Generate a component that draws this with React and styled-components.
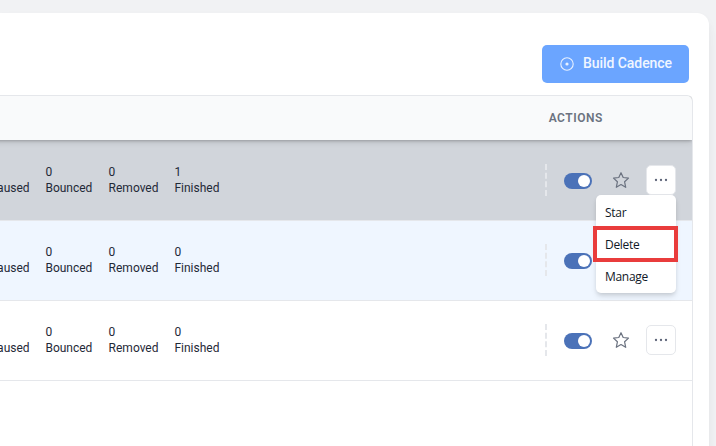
import React from 'react';
import styled, { createGlobalStyle } from 'styled-components';

const GlobalStyle = createGlobalStyle`
  * { box-sizing: border-box; }
  body { margin: 0; overflow: hidden; background: #f1f2f4; font-family: Roboto, "Liberation Sans", sans-serif; }
`;

const Page = styled.div`
  height: 446px;
  width: 716px;
  padding: 13px 7px 0 0;
  overflow: hidden;
`;

const Card = styled.main`
  height: 460px;
  padding: 32px 16px 0 0;
  background: #fff;
  border-top-right-radius: 12px;
  box-shadow: 0 10px 15px -3px rgba(0, 0, 0, 0.05), 0 4px 8px rgba(0, 0, 0, 0.04);
`;

const Toolbar = styled.div`
  display: flex;
  justify-content: flex-end;
  padding-right: 4px;
  margin-bottom: 12px;
`;

const BuildButton = styled.button`
  display: flex;
  align-items: center;
  gap: 9px;
  width: 147px;
  height: 38px;
  padding: 0 0 0 18px;
  border: 0;
  border-radius: 5px;
  background: #6ba5ff;
  color: #f0f6ff;
  font: 500 14px/20px Roboto, sans-serif;
  letter-spacing: -0.06px;
  white-space: nowrap;

  svg { flex: none; }
  span { margin-top: -2px; }
`;

const Table = styled.section`
  height: 400px;
  border: 1px solid #e5e7eb;
  border-left: 0;
  border-top-right-radius: 6px;
`;

const TableHeader = styled.header`
  position: relative;
  display: flex;
  align-items: center;
  justify-content: flex-end;
  height: 44px;
  margin-left: -10px;
  padding-right: 89px;
  border-top-right-radius: 5px;
  background: #f9fafb;
  box-shadow: 0 1px 3px rgba(0, 0, 0, 0.2), 0 2px 6px rgba(0, 0, 0, 0.12);
  clip-path: inset(0 0 -12px 0);
  color: #6b7280;
  font-size: 12px;
  font-weight: 600;
  letter-spacing: 0.55px;
`;

const Row = styled.div`
  display: flex;
  align-items: center;
  justify-content: space-between;
  height: ${(p) => (p.$first ? 81 : 80)}px;
  padding: 0 16px ${(p) => (p.$first ? 0 : 1)}px 0;
  border-bottom: 1px solid #e5e7eb;
  background: ${(p) => p.$bg};
`;

const Stats = styled.div`
  display: flex;
  gap: 16px;
  margin-left: -10.4px;
`;

const Stat = styled.div`
  width: ${(p) => p.$width}px;
  color: #1f2937;
  font-size: 12px;
  line-height: 16px;
  white-space: nowrap;
`;

const Actions = styled.div`
  display: flex;
  align-items: center;
  width: 131px;
`;

const Divider = styled.div`
  height: 32px;
  border-left: 2px dashed #e5e7eb;
`;

const Toggle = styled.div`
  display: flex;
  align-items: center;
  justify-content: flex-end;
  width: 28px;
  height: 16px;
  margin: 2px 21px 0 17px;
  padding: 2px;
  border-radius: 8px;
  background: #4b72b8;

  &::after {
    content: '';
    width: 12px;
    height: 12px;
    border-radius: 50%;
    background: #fff;
  }
`;

const StarIcon = styled.svg`
  flex: none;
  width: 16px;
  height: 16px;
  overflow: visible;
  fill: none;
  stroke: #6b7280;
  stroke-width: 1.2;
  stroke-linejoin: round;
`;

const MoreAnchor = styled.div`
  position: relative;
  margin-left: auto;
`;

const MoreButton = styled.button`
  display: flex;
  align-items: center;
  justify-content: center;
  width: 30px;
  height: 30px;
  padding: 0;
  border: 1px solid #e5e7eb;
  border-radius: 5px;
  background: #fff;
`;

const Menu = styled.div`
  position: absolute;
  z-index: 2;
  top: 30px;
  right: 0;
  width: 80px;
  height: 98px;
  padding: 1px 0;
  border-radius: 5px;
  background: #fff;
  box-shadow: 0 4px 6px -1px rgba(0, 0, 0, 0.12), 0 2px 4px -1px rgba(0, 0, 0, 0.1);
`;

const MenuItem = styled.div`
  position: relative;
  height: 32px;
  padding-left: 9px;
  color: #111827;
  font: 12px/33px "Segoe UI", "Open Sans", sans-serif;
  letter-spacing: -0.3px;
`;

const Highlight = styled.div`
  position: absolute;
  top: -2px;
  left: -3px;
  width: 85px;
  height: 36px;
  border: 4px solid #e93c3c;
`;

const labels = [
  { name: 'Paused', width: 39.8 },
  { name: 'Bounced', width: 47.2 },
  { name: 'Removed', width: 49.8 },
  { name: 'Finished', width: 46 },
];

const rows = [
  { bg: '#d1d5db', values: [0, 0, 0, 1], open: true },
  { bg: '#eff6ff', values: [0, 0, 0, 0] },
  { bg: '#fff', values: [0, 0, 0, 0] },
];

function ActionCell({ open }) {
  return (
    <Actions>
      <Divider />
      <Toggle />
      <StarIcon viewBox="0 0 16 16">
        <path d="M8 .7 L10.2 5.5 L15.5 6.1 L11.6 9.8 L12.7 15.3 L8 12.6 L3.3 15.3 L4.4 9.8 L.5 6.1 L5.8 5.5 Z" />
      </StarIcon>
      <MoreAnchor>
        <MoreButton aria-label="More actions">
          <svg width="14" height="4" viewBox="0 0 14 4" fill="#5d6478">
            <circle cx="2" cy="2" r="1.15" />
            <circle cx="7" cy="2" r="1.15" />
            <circle cx="12" cy="2" r="1.15" />
          </svg>
        </MoreButton>
        {open && (
          <Menu>
            <MenuItem>Star</MenuItem>
            <MenuItem>Delete<Highlight /></MenuItem>
            <MenuItem>Manage</MenuItem>
          </Menu>
        )}
      </MoreAnchor>
    </Actions>
  );
}

export default function App() {
  return (
    <>
      <GlobalStyle />
      <Page>
        <Card>
          <Toolbar>
            <BuildButton>
              <svg width="14" height="14" viewBox="0 0 14 14">
                <circle cx="7" cy="7" r="6.2" fill="none" stroke="#e8f1ff" strokeWidth="1.1" />
                <circle cx="7" cy="7" r="1.6" fill="#e8f1ff" />
              </svg>
              <span>Build Cadence</span>
            </BuildButton>
          </Toolbar>
          <Table>
            <TableHeader>ACTIONS</TableHeader>
            {rows.map((row, i) => (
              <Row key={i} $bg={row.bg} $first={i === 0}>
                <Stats>
                  {labels.map((label, j) => (
                    <Stat key={label.name} $width={label.width}>
                      <div>{row.values[j]}</div>
                      <div>{label.name}</div>
                    </Stat>
                  ))}
                </Stats>
                <ActionCell open={row.open} />
              </Row>
            ))}
          </Table>
        </Card>
      </Page>
    </>
  );
}
